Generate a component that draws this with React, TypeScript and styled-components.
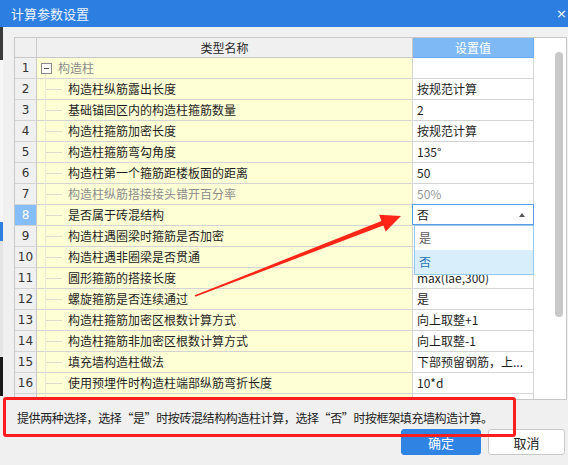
import React from "react";
import styled, { createGlobalStyle } from "styled-components";

const GlobalStyle = createGlobalStyle`
  html, body {
    margin: 0;
    padding: 0;
    background: #f0f0f0;
    overflow: hidden;
  }
  body {
    font-family: "Noto Sans CJK SC", "Noto Sans", sans-serif;
  }
`;

type Row = {
  name: string;
  value: string;
  group?: boolean;
  muted?: boolean;
  open?: boolean;
  partial?: boolean;
};

const rows: Row[] = [
  { name: "构造柱", value: "", group: true },
  { name: "构造柱纵筋露出长度", value: "按规范计算" },
  { name: "基础锚固区内的构造柱箍筋数量", value: "2" },
  { name: "构造柱箍筋加密长度", value: "按规范计算" },
  { name: "构造柱箍筋弯勾角度", value: "135°" },
  { name: "构造柱第一个箍筋距楼板面的距离", value: "50" },
  { name: "构造柱纵筋搭接接头错开百分率", value: "50%", muted: true },
  { name: "是否属于砖混结构", value: "否", open: true },
  { name: "构造柱遇圈梁时箍筋是否加密", value: "" },
  { name: "构造柱遇非圈梁是否贯通", value: "" },
  { name: "圆形箍筋的搭接长度", value: "max(lae,300)" },
  { name: "螺旋箍筋是否连续通过", value: "是" },
  { name: "构造柱箍筋加密区根数计算方式", value: "向上取整+1" },
  { name: "构造柱箍筋非加密区根数计算方式", value: "向上取整-1" },
  { name: "填充墙构造柱做法", value: "下部预留钢筋，上..." },
  { name: "使用预埋件时构造柱端部纵筋弯折长度", value: "10*d" },
  { name: "", value: "", partial: true },
];

const stripParts = [
  { color: "#3b3b3b", h: 33 },
  { color: "#f6f6f6", h: 162 },
  { color: "#2d7fe0", h: 19 },
  { color: "#e4e4e4", h: 116 },
  { color: "#1a1a1a", h: 39 },
  { color: "#f0f0f0", h: 69 },
];

const Window = styled.div`
  position: relative;
  width: 568px;
  height: 465px;
  background: #f0f0f0;
  overflow: hidden;
`;

const TitleBar = styled.div`
  height: 27px;
  background: #2c7fe0;
  display: flex;
  align-items: center;
  justify-content: space-between;
  padding-left: 11px;
  color: #eef4ff;
  font-size: 13px;
  line-height: 27px;
  overflow: hidden;
`;

const CloseMark = styled.span`
  font-family: "DejaVu Sans", sans-serif;
  font-size: 13px;
  margin-right: 1px;
  color: #ffffff;
`;

const Body = styled.div`
  display: flex;
  height: 438px;
`;

const SideStrip = styled.div`
  width: 3px;
  display: flex;
  flex-direction: column;
`;

const StripPart = styled.div<{ $color: string; $h: number }>`
  height: ${(p) => p.$h}px;
  background: ${(p) => p.$color};
`;

const Content = styled.div`
  flex: 1;
  display: flex;
  flex-direction: column;
  padding: 10px 1px 0 11px;
`;

const Table = styled.div`
  height: 363px;
  box-sizing: border-box;
  border: 1px solid #c8c8c8;
  background: #ffffff;
  display: flex;
`;

const Grid = styled.div`
  display: grid;
  grid-template-columns: 22px 376px 121px;
  grid-template-rows: 20px repeat(17, 21px);
  overflow: hidden;
  font-size: 12px;
  color: #1e1e1e;
`;

const Cell = styled.div`
  box-sizing: border-box;
  border-right: 1px solid #d4d4d4;
  border-bottom: 1px solid #d4d4d4;
  display: flex;
  align-items: center;
  line-height: 20px;
  white-space: nowrap;
`;

const HeadCell = styled(Cell)<{ $accent?: boolean }>`
  justify-content: center;
  background: ${(p) => (p.$accent ? "#7fb9f5" : "#f0f0f0")};
  color: ${(p) => (p.$accent ? "#ffffff" : "#2a2a2a")};
  border-bottom-color: ${(p) => (p.$accent ? "#6aa9ef" : "#c8c8c8")};
  border-right-color: ${(p) => (p.$accent ? "#6aa9ef" : "#c8c8c8")};
`;

const NumCell = styled(Cell)<{ $active?: boolean }>`
  justify-content: center;
  font-family: "DejaVu Sans", "Noto Sans", sans-serif;
  font-size: 12px;
  background: ${(p) => (p.$active ? "#84bdf7" : "#f0f0f0")};
  color: ${(p) => (p.$active ? "#ffffff" : "#333333")};
  border-right-color: #c8c8c8;
`;

const NameCell = styled(Cell)<{ $muted?: boolean; $group?: boolean }>`
  position: relative;
  background: #ffffd6;
  padding-left: ${(p) => (p.$group ? 21 : 31)}px;
  color: ${(p) => (p.$muted || p.$group ? "#8c8c8c" : "#1e1e1e")};

  &::before {
    content: "";
    position: absolute;
    left: 8px;
    top: ${(p) => (p.$group ? "16px" : "0")};
    bottom: -1px;
    border-left: 1px solid #e6e6d2;
  }

  &::after {
    content: "";
    display: ${(p) => (p.$group ? "none" : "block")};
    position: absolute;
    left: 9px;
    top: 10px;
    width: 16px;
    border-top: 1px solid #dcdccc;
  }
`;

const FoldBox = styled.span`
  position: absolute;
  left: 4px;
  top: 5px;
  width: 9px;
  height: 9px;
  border: 1px solid #8a8a8a;
  background: #ffffff;
  z-index: 1;

  &::after {
    content: "";
    position: absolute;
    left: 2px;
    right: 2px;
    top: 4px;
    border-top: 1px solid #555555;
  }
`;

const ValueCell = styled(Cell)<{ $muted?: boolean }>`
  position: relative;
  padding-left: 4px;
  background: #ffffff;
  color: ${(p) => (p.$muted ? "#999999" : "#1e1e1e")};
`;

const Editor = styled.div`
  position: absolute;
  top: -1px;
  left: -1px;
  right: -1px;
  height: 21px;
  box-sizing: border-box;
  border: 1px solid #5b9de2;
  background: #ffffff;
  display: flex;
  align-items: center;
  justify-content: space-between;
  padding: 0 8px 0 4px;
  z-index: 2;
`;

const Caret = styled.span`
  width: 0;
  height: 0;
  border-left: 3px solid transparent;
  border-right: 3px solid transparent;
  border-bottom: 4px solid #555555;
`;

const OptionList = styled.div`
  position: absolute;
  top: 20px;
  left: 1px;
  right: -1px;
  box-sizing: border-box;
  border: 1px solid #96caec;
  background: #ffffff;
  z-index: 3;
`;

const OptionItem = styled.div<{ $selected?: boolean }>`
  height: 24px;
  line-height: 24px;
  padding-left: 4px;
  background: ${(p) => (p.$selected ? "#d8eefa" : "#ffffff")};
  color: ${(p) => (p.$selected ? "#2574b8" : "#5a5a5a")};
`;

const ScrollStrip = styled.div`
  flex: 1;
  background: #ffffff;
  padding: 14px 0 0 21px;
`;

const Thumb = styled.div`
  width: 8px;
  height: 265px;
  border-radius: 4px;
  background: #c8c8c8;
`;

const Description = styled.div`
  height: 29px;
  box-sizing: border-box;
  padding: 10px 0 0 3px;
  font-size: 12px;
  line-height: 16px;
  letter-spacing: -0.4px;
  color: #222222;
  white-space: nowrap;
`;

const ButtonRow = styled.div`
  display: flex;
  justify-content: flex-end;
  gap: 7px;
  padding-right: 2px;
`;

const Button = styled.button<{ $primary?: boolean; $w: number }>`
  width: ${(p) => p.$w}px;
  height: 26px;
  box-sizing: border-box;
  border-radius: 3px;
  border: 1px solid ${(p) => (p.$primary ? "#2f83e3" : "#c8c8c8")};
  background: ${(p) => (p.$primary ? "#2f83e3" : "#ffffff")};
  color: ${(p) => (p.$primary ? "#ffffff" : "#1e1e1e")};
  font-family: "Noto Sans CJK SC", sans-serif;
  font-size: 13px;
  padding: 0;
`;

const Annotation = styled.div`
  position: absolute;
  left: 3px;
  top: 397px;
  width: 513px;
  height: 40px;
  box-sizing: border-box;
  border: 3px solid #ff1d1d;
  border-radius: 3px;
  pointer-events: none;
`;

const ArrowLayer = styled.svg`
  position: absolute;
  left: 0;
  top: 0;
  pointer-events: none;
  z-index: 5;
`;

const App: React.FC = () => {
  return (
    <Window>
      <GlobalStyle />
      <TitleBar>
        <span>计算参数设置</span>
        <CloseMark>×</CloseMark>
      </TitleBar>
      <Body>
        <SideStrip>
          {stripParts.map((s, i) => (
            <StripPart key={i} $color={s.color} $h={s.h} />
          ))}
        </SideStrip>
        <Content>
          <Table>
            <Grid>
              <HeadCell />
              <HeadCell>类型名称</HeadCell>
              <HeadCell $accent>设置值</HeadCell>
              {rows.map((r, i) => (
                <React.Fragment key={i}>
                  <NumCell $active={r.open}>{r.partial ? "" : i + 1}</NumCell>
                  <NameCell $muted={r.muted} $group={r.group}>
                    {r.group && <FoldBox />}
                    {r.name}
                  </NameCell>
                  <ValueCell $muted={r.muted}>
                    {r.open ? (
                      <>
                        <Editor>
                          <span>{r.value}</span>
                          <Caret />
                        </Editor>
                        <OptionList>
                          <OptionItem>是</OptionItem>
                          <OptionItem $selected>否</OptionItem>
                        </OptionList>
                      </>
                    ) : (
                      r.value
                    )}
                  </ValueCell>
                </React.Fragment>
              ))}
            </Grid>
            <ScrollStrip>
              <Thumb />
            </ScrollStrip>
          </Table>
          <Description>
            提供两种选择，选择“是”时按砖混结构构造柱计算，选择“否”时按框架填充墙构造计算。
          </Description>
          <ButtonRow>
            <Button $primary $w={80}>确定</Button>
            <Button $w={77}>取消</Button>
          </ButtonRow>
        </Content>
      </Body>
      <Annotation />
      <ArrowLayer width={568} height={465} viewBox="0 0 568 465">
        <polygon
          points="194.7,295.3 381.5,220.9 379.1,214.8 401,216 385.7,231.6 383.3,225.5 195.3,296.7"
          fill="#ff2618"
        />
      </ArrowLayer>
    </Window>
  );
};

export default App;
